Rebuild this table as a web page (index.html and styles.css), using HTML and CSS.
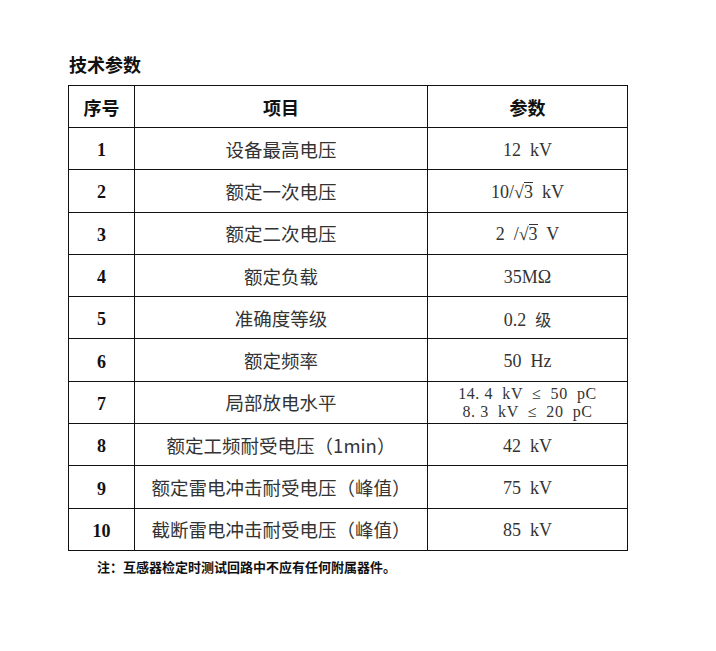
FILE: index.html
```html
<!DOCTYPE html>
<html lang="zh-CN">
<head>
<meta charset="utf-8">
<title>技术参数</title>
<link rel="stylesheet" href="styles.css">
</head>
<body>
<div class="page">
  <h1 class="title">技术参数</h1>
  <table class="spec">
    <colgroup>
      <col class="c-no">
      <col class="c-item">
      <col class="c-val">
    </colgroup>
    <thead>
      <tr><th>序号</th><th>项目</th><th>参数</th></tr>
    </thead>
    <tbody>
      <tr><td class="no">1</td><td class="item">设备最高电压</td><td class="val">12  kV</td></tr>
      <tr><td class="no">2</td><td class="item">额定一次电压</td><td class="val">10/√<span class="ov">3</span>  kV</td></tr>
      <tr><td class="no">3</td><td class="item">额定二次电压</td><td class="val">2  /√<span class="ov">3</span>  V</td></tr>
      <tr><td class="no">4</td><td class="item">额定负载</td><td class="val">35MΩ</td></tr>
      <tr><td class="no">5</td><td class="item">准确度等级</td><td class="val">0.2  <span class="cjk">级</span></td></tr>
      <tr><td class="no">6</td><td class="item">额定频率</td><td class="val">50  Hz</td></tr>
      <tr><td class="no">7</td><td class="item">局部放电水平</td><td class="val two"><span class="ln">14. 4  kV  ≤  50  pC</span><span class="ln">8. 3  kV  ≤  20  pC</span></td></tr>
      <tr><td class="no">8</td><td class="item">额定工频耐受电压（1min）</td><td class="val">42  kV</td></tr>
      <tr><td class="no">9</td><td class="item">额定雷电冲击耐受电压（峰值）</td><td class="val">75  kV</td></tr>
      <tr><td class="no">10</td><td class="item">截断雷电冲击耐受电压（峰值）</td><td class="val">85  kV</td></tr>
    </tbody>
  </table>
  <p class="note">注：互感器检定时测试回路中不应有任何附属器件。</p>
</div>
</body>
</html>
```

FILE: styles.css
```css
html, body {
  margin: 0;
  padding: 0;
  background: #ffffff;
}

.page {
  padding: 51px 0 0 68px;
  font-family: "Noto Sans CJK SC", "Noto Sans", sans-serif;
  color: #222;
}

.title {
  margin: 0 0 8px 1px;
  font-size: 18px;
  line-height: 26px;
  font-weight: 700;
  color: #111;
}

.spec {
  border-collapse: collapse;
  table-layout: fixed;
  width: 559px;
}

.c-no { width: 66px; }
.c-item { width: 293px; }
.c-val { width: 200px; }

.spec th,
.spec td {
  border: 1px solid #111;
  padding: 0;
  text-align: center;
  vertical-align: middle;
  height: 41px;
}

.spec th {
  font-family: "Noto Sans CJK SC", sans-serif;
  font-size: 18px;
  font-weight: 700;
  color: #111;
}

.spec td {
  height: 41.3px;
}

.spec td.no {
  font-family: "Liberation Serif", "Times New Roman", serif;
  font-weight: 700;
  font-size: 18px;
  color: #111;
  padding-top: 4px;
  height: 37.3px;
}

.item {
  font-size: 18.5px;
  color: #333;
}

.spec td.val {
  font-family: "Liberation Serif", "Times New Roman", serif;
  font-size: 18px;
  color: #333;
  white-space: pre;
  padding-top: 3px;
  height: 38.3px;
}

.val .cjk {
  font-family: "Noto Sans CJK SC", sans-serif;
  font-size: 16px;
}

.spec td.val.two {
  font-size: 16px;
  letter-spacing: 0.6px;
  padding-top: 2px;
  height: 39.3px;
}

.ln {
  display: block;
  line-height: 18px;
}

.ov {
  border-top: 1px solid #333;
  display: inline-block;
  line-height: 18px;
}

.note {
  margin: 6px 0 0 29px;
  font-size: 13px;
  line-height: 20px;
  font-weight: 700;
  color: #111;
}
```
